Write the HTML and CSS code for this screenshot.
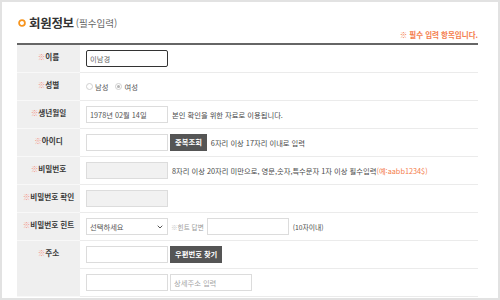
FILE: index.html
```html
<!DOCTYPE html>
<html lang="ko">
<head>
<meta charset="utf-8">
<link rel="stylesheet" href="styles.css">
</head>
<body>
<div class="page">
  <div class="header">
    <h1 class="title">
      <svg class="title-icon" width="8" height="8" viewBox="0 0 8 8"><circle cx="4" cy="4" r="2.9" fill="none" stroke="#f7941d" stroke-width="1.8"/></svg>
      <span class="title-main">회원정보</span>
      <span class="title-sub">(필수입력)</span>
    </h1>
    <p class="note">※ 필수 입력 항목입니다.</p>
  </div>
  <div class="form">
    <div class="label"><span class="mark">※</span>이름</div>
    <div class="field"><input class="input focused" type="text" value="이남경"></div>

    <div class="label"><span class="mark">※</span>성별</div>
    <div class="field">
      <span class="radio"></span><span class="radio-text">남성</span>
      <span class="radio checked"></span><span class="radio-text">여성</span>
    </div>

    <div class="label"><span class="mark">※</span>생년월일</div>
    <div class="field"><input class="input" type="text" value="1978년 02월 14일"><span class="help">본인 확인을 위한 자료로 이용됩니다.</span></div>

    <div class="label"><span class="mark">※</span>아이디</div>
    <div class="field"><input class="input" type="text"><button class="btn">중복조회</button><span class="help help-btn">6자리 이상 17자리 이내로 입력</span></div>

    <div class="label"><span class="mark">※</span>비밀번호</div>
    <div class="field"><input class="input gray" type="password"><span class="help">8자리 이상 20자리 미만으로, 영문,숫자,특수문자 1자 이상 필수입력<span class="ex">(예:aabb1234$)</span></span></div>

    <div class="label"><span class="mark">※</span>비밀번호 확인</div>
    <div class="field"><input class="input gray" type="password"></div>

    <div class="label"><span class="mark">※</span>비밀번호 힌트</div>
    <div class="field">
      <div class="select"><span>선택하세요</span><svg width="6" height="4" viewBox="0 0 6 4"><path d="M0.7 0.7 L3 3 L5.3 0.7" fill="none" stroke="#555" stroke-width="1"/></svg></div>
      <span class="hint-label"><span class="mark-light">※</span>힌트 답변</span>
      <input class="input" type="text">
      <span class="help small">(10자이내)</span>
    </div>

    <div class="label label-tall"><span class="mark">※</span>주소</div>
    <div class="field"><input class="input" type="text"><button class="btn">우편번호 찾기</button></div>
    <div class="field"><input class="input" type="text"><input class="input addr" type="text" placeholder="상세주소 입력"></div>
  </div>
</div>
</body>
</html>
```
FILE: styles.css
```css
html, body {
  margin: 0;
  padding: 0;
  background: #fff;
}
body {
  font-family: "Noto Sans CJK KR", "Noto Sans", sans-serif;
  color: #444;
}
.page {
  width: 500px;
  height: 300px;
  box-sizing: border-box;
  border: 2px solid #e2e2e2;
  padding: 0 20px 0 15px;
  overflow: hidden;
}
.header {
  height: 41px;
  box-sizing: border-box;
  padding-bottom: 4px;
  display: flex;
  justify-content: space-between;
  align-items: flex-end;
}
.title {
  margin: 0 0 8px 1px;
  display: flex;
  align-items: center;
  font-weight: normal;
  line-height: 15px;
}
.title-icon {
  display: block;
  margin-right: 3px;
}
.title-main {
  font-size: 12.5px;
  font-weight: bold;
  color: #333;
  letter-spacing: -0.3px;
}
.title-sub {
  font-size: 9.5px;
  color: #666;
  margin-left: 2px;
  padding-top: 2px;
}
.note {
  margin: 0;
  font-size: 7.5px;
  line-height: 9px;
  font-weight: bold;
  color: #f47c4c;
}
.form {
  border-top: 2px solid #666;
  display: grid;
  grid-template-columns: 63px 1fr;
  grid-auto-rows: 28px;
}
.label {
  background: #efefef;
  border-bottom: 1px solid #f8f8f8;
  box-sizing: border-box;
  text-align: center;
  font-size: 7.6px;
  line-height: 9px;
  font-weight: bold;
  color: #383838;
  padding-top: 7px;
  white-space: nowrap;
}
.label-tall {
  grid-row: span 2;
}
.mark {
  color: #f39a8c;
}
.mark-light {
  color: #c8c8c8;
}
.field {
  border-bottom: 1px solid #ebebeb;
  box-sizing: border-box;
  display: flex;
  align-items: center;
  padding-left: 6px;
  font-size: 7.3px;
  color: #4a4a4a;
  white-space: nowrap;
}
.input {
  width: 82px;
  height: 17px;
  box-sizing: border-box;
  border: 1px solid #dcdcdc;
  background: #fff;
  padding: 0 3px;
  margin: 0;
  font-family: inherit;
  font-size: 7.3px;
  color: #555;
  outline: none;
}
.input::placeholder {
  color: #a5a5a5;
}
.input.focused {
  border: 1.5px solid #333;
  border-radius: 2px;
  color: #666;
}
.input.gray {
  background: #f1f1f1;
}
.input.addr {
  margin-left: 2px;
}
.help {
  margin-left: 4px;
  color: #4a4a4a;
}
.help-btn {
  margin-left: 4px;
}
.ex {
  color: #f47c4c;
}
.small {
  margin-left: 4px;
  font-size: 6.8px;
}
.btn {
  margin: 0 0 0 2px;
  height: 17px;
  border: none;
  background: #555;
  color: #fff;
  font-family: inherit;
  font-size: 7.3px;
  font-weight: bold;
  padding: 0 5px;
  line-height: 17px;
}
.radio {
  width: 7px;
  height: 7px;
  box-sizing: border-box;
  border: 1px solid #d0d0d0;
  border-radius: 50%;
  background: #fff;
  margin-right: 2px;
  position: relative;
}
.radio.checked {
  margin-left: 7px;
  background: #fff;
}
.radio.checked::after {
  content: "";
  position: absolute;
  left: 1px;
  top: 1px;
  width: 3px;
  height: 3px;
  border-radius: 50%;
  background: #b5b5b5;
}
.radio-text {
  color: #555;
}
.select {
  width: 82px;
  height: 17px;
  box-sizing: border-box;
  border: 1px solid #dcdcdc;
  background: #fff;
  display: flex;
  align-items: center;
  justify-content: space-between;
  padding: 0 4px 0 3px;
  color: #555;
}
.select svg {
  display: block;
}
.hint-label {
  margin-left: 3px;
  margin-right: 3px;
  font-size: 6.6px;
  color: #999;
}
```
